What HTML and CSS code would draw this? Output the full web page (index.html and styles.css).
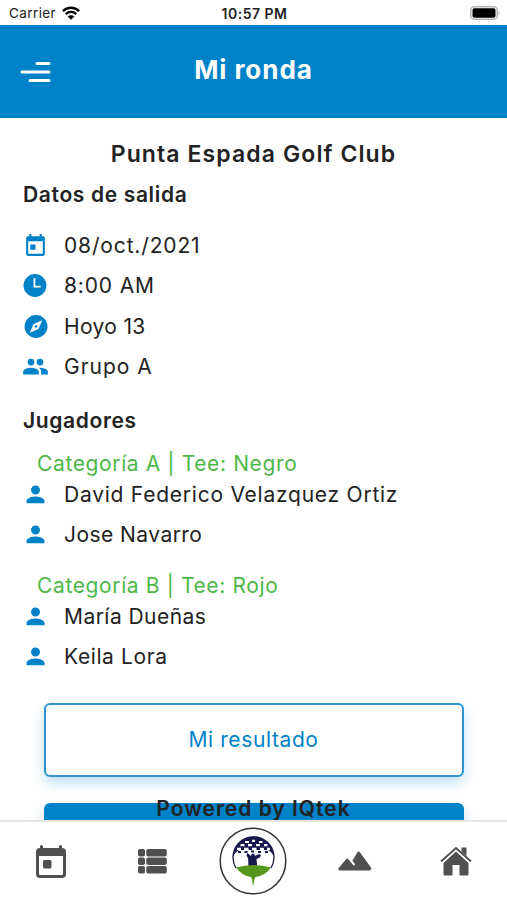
FILE: index.html
```html
<!DOCTYPE html>
<html lang="es">
<head>
<meta charset="utf-8">
<meta name="viewport" content="width=device-width, initial-scale=1">
<title>Mi ronda</title>
<link rel="stylesheet" href="styles.css">
</head>
<body>
<svg width="0" height="0" class="defs" aria-hidden="true">
  <symbol id="calendar" viewBox="0 0 24 24"><path d="M19 3h-1V1h-2v2H8V1H6v2H5a2 2 0 0 0-2 2v15a2 2 0 0 0 2 2h14a2 2 0 0 0 2-2V5a2 2 0 0 0-2-2zm0 17H5V8h14zM7 11h5v5H7z"/></symbol>
  <symbol id="person" viewBox="0 0 24 24"><path d="M12 12a4.300 4.300 0 1 0 0-8.600 4.300 4.300 0 0 0 0 8.600zm0 1.800c-2.700 0-8.600 1.300-8.600 4.200v2.400h17.200V18c0-2.900-5.900-4.200-8.600-4.200z"/></symbol>
</svg>
<div class="screen">
  <div class="status">
    <span class="carrier">Carrier
      <svg class="wifi" viewBox="0 0 18 14"><g fill="none" stroke="#000" stroke-width="2.300"><path d="M.9 5.100a11.500 11.500 0 0 1 16.200 0"/><path d="M3.800 8.100a7.400 7.400 0 0 1 10.400 0"/></g><path d="M9 13.800 5.700 10.500a4.700 4.700 0 0 1 6.600 0z"/></svg>
    </span>
    <b class="time">10:57 PM</b>
    <svg class="battery" viewBox="0 0 30 14"><rect x=".8" y=".8" width="26.400" height="12.400" rx="3.500" fill="#fff" stroke="#b5b5b5" stroke-width="1.500"/><rect x="2.500" y="2.300" width="23" height="9.400" rx="1.800"/><path d="M28.500 4.500q2 2.500 0 5z" fill="#aaa"/></svg>
  </div>
  <header class="header">
    <svg class="menu" viewBox="0 0 32 24"><path d="M17 3.500h12M2 12h27M10 20.500h19" stroke="#fff" stroke-width="3" stroke-linecap="round"/></svg>
    <h1>Mi ronda</h1>
  </header>
  <main class="content">
    <h2 class="club">Punta Espada Golf Club</h2>
    <h3 class="section">Datos de salida</h3>
    <ul class="details">
      <li><svg class="icon"><use href="#calendar"/></svg><span class="t-date">08/oct./2021</span></li>
      <li><svg class="icon" viewBox="0 0 24 24"><circle cx="11.500" cy="12" r="11"/><path d="M11 5v8h6" fill="none" stroke="#fff" stroke-width="1.700"/></svg><span class="t-time">8:00 AM</span></li>
      <li><svg class="icon" viewBox="0 0 24 24"><circle cx="12.500" cy="12" r="11"/><path d="m18.500 6-3.700 8.300L6.500 18l3.700-8.300z" fill="#fff"/><circle cx="12.500" cy="12" r="1.300"/></svg><span class="t-hole">Hoyo 13</span></li>
      <li><svg class="icon group" viewBox="0 0 24 24"><path d="M16 11a3 3 0 1 0 0-6 3 3 0 0 0 0 6zm-8 0a3 3 0 1 0 0-6 3 3 0 0 0 0 6zm0 2c-2.300 0-7 1.200-7 3.500V19h14v-2.500C15 14.200 10.300 13 8 13zm8 0-1 .1c1.200.8 2 2 2 3.400V19h6v-2.500c0-2.300-4.700-3.500-7-3.500z"/></svg><span class="t-group">Grupo A</span></li>
    </ul>
    <h3 class="section players">Jugadores</h3>
    <section class="category">
      <h4>Categoría A | Tee: Negro</h4>
      <ul>
        <li><svg class="icon"><use href="#person"/></svg><span class="t-long">David Federico Velazquez Ortiz</span></li>
        <li><svg class="icon"><use href="#person"/></svg><span class="t-short">Jose Navarro</span></li>
      </ul>
    </section>
    <section class="category">
      <h4>Categoría B | Tee: Rojo</h4>
      <ul>
        <li><svg class="icon"><use href="#person"/></svg><span class="t-short">María Dueñas</span></li>
        <li><svg class="icon"><use href="#person"/></svg><span>Keila Lora</span></li>
      </ul>
    </section>
    <button class="btn outline">Mi resultado</button>
    <button class="btn solid"></button>
    <p class="powered">Powered by IQtek</p>
  </main>
  <nav class="tabs">
    <svg class="tab-cal" viewBox="0 0 30 33"><path d="M5.500 0a1.500 1.500 0 0 1 1.500 1.500V3h16V1.500a1.500 1.500 0 0 1 3 0V3a4 4 0 0 1 4 4v22a4 4 0 0 1-4 4H4a4 4 0 0 1-4-4V7a4 4 0 0 1 4-4V1.500A1.500 1.500 0 0 1 5.500 0zM3 11v17.500A1.500 1.500 0 0 0 4.500 30h21a1.500 1.500 0 0 0 1.500-1.500V11z"/><rect x="7" y="15" width="8.500" height="8.500" rx="1.500"/></svg>
    <svg class="tab-list" viewBox="0 0 29 25"><rect width="7" height="7.500" rx="1.800"/><rect x="8.300" width="20.500" height="7.500" rx="1.800"/><rect y="8.500" width="7" height="7.500" rx="1.800"/><rect x="8.300" y="8.500" width="20.500" height="7.500" rx="1.800"/><rect y="17" width="7" height="7.500" rx="1.800"/><rect x="8.300" y="17" width="20.500" height="7.500" rx="1.800"/></svg>
    <svg class="tab-logo" viewBox="0 0 68 68">
      <circle cx="34" cy="34" r="32.800" fill="#fff" stroke="#333" stroke-width="1.500"/>
      <path d="M17 41A20.500 20.500 0 1 1 52 41" fill="none" stroke="#17174d" stroke-width="1.300"/>
      <path d="M14 30A20.500 20.500 0 0 1 55 30Q53 25 49 23H20Q16 25 14 30z" fill="#17174d"/>
      <path d="M26 15h4M33 13.800h3M40 15h3.500M21.500 18.200h4M29 18.200h4M37 18.200h4M45 18.200h3.500M18 21.800h4M25 21.800h4.500M33 21.800h4.500M41 21.800h4M48 21.800h3" stroke="#fff" stroke-width="2.200"/>
      <path d="M19 25h3M25.500 25h3M32 24.500h3M39 25h3M46 25h3" stroke="#17174d" stroke-width="2"/>
      <path d="M29.500 42l-.3-10-1.700-4 1-2 3.500 3q0-2.500 2-2.500t2 2.500l4-2 2 1.200-1.200 2.300-3.300 1.500q.3 6 1.500 10z" fill="#17174d"/>
      <path d="M17 40.500q17-5 35 0-6 8.500-15.500 9.500-2 3-1.800 8h-1q.2-5-1.700-8-9-1-15-9.500z" fill="#56951c"/>
    </svg>
    <svg class="tab-hills" viewBox="0 0 34 20"><path d="M1.500 19.500Q-.5 19 .8 17L8 8.300q1.200-1.400 2.400 0l4.500 5.400q.8 1.200 1.700.3.700-.8 0-1.500l-2.200-2.700L19.300 1.500q1.400-1.800 2.800 0L33 16.500q1 2.500-1.500 3z"/></svg>
    <svg class="tab-home" viewBox="0 0 32 30"><path d="m1 15.500 15-13.500 15 13.500" fill="none" stroke="#505050" stroke-width="2"/><path d="M16 5.500 3.500 17v11A1.500 1.500 0 0 0 5 29.500h7.500V19h7v10.500H27a1.500 1.500 0 0 0 1.500-1.500V17z"/><path d="M21.500 1.500h5V10l-5-4.300z"/></svg>
  </nav>
</div>
</body>
</html>
```
FILE: styles.css
```css
* { box-sizing: border-box; margin: 0; padding: 0; }
body { background: #fff; color: #222; font-family: Inter, "Liberation Sans", sans-serif; }
ul { list-style: none; }
svg { display: block; flex: none; }
.defs { position: absolute; }
.screen { width: 507px; height: 900px; display: flex; flex-direction: column; overflow: hidden; }

.status { height: 25px; flex: none; display: grid; grid-template-columns: 1fr auto 1fr; align-items: center; padding: 1px 7px 0 9px; font-size: 13.500px; }
.carrier { display: flex; align-items: center; gap: 6px; letter-spacing: .4px; }
.wifi { width: 18px; height: 14px; }
.time { font-weight: 600; font-size: 14px; letter-spacing: .5px; }
.battery { width: 30px; height: 14px; justify-self: end; }

.header { height: 93px; flex: none; display: grid; grid-template-columns: 1fr auto 1fr; align-items: center; padding: 0 20px; background: #0082c9; color: #fff; }
.header h1 { font-size: 26px; line-height: 30px; font-weight: 700; letter-spacing: .95px; margin-top: -4px; }
.menu { width: 32px; height: 24px; }

.content { position: relative; flex: 1; min-height: 0; overflow: hidden; padding: 22px 23px 0; }
.club { font-size: 23px; line-height: 28px; font-weight: 600; text-align: center; letter-spacing: 1.100px; }
.section { font-size: 21px; line-height: 26px; font-weight: 600; letter-spacing: .65px; margin-top: 14px; }
.details { margin-top: 17px; }
.details li, .category li { display: flex; align-items: center; gap: 16px; font-size: 21px; letter-spacing: .6px; height: 40.500px; white-space: nowrap; }
.icon { width: 25px; height: 25px; fill: #0082c9; }
.icon.group { width: 27px; height: 27px; margin: 0 -1px; }
.t-date, .t-time { letter-spacing: .85px; }
.t-hole { letter-spacing: .35px; }
.details .t-group { letter-spacing: 1px; }
.t-long { letter-spacing: .76px; }
.t-short { letter-spacing: .45px; }
.players { margin-top: 21px; }
.category { margin-top: 17px; }
.category h4 { font-size: 21px; line-height: 26px; font-weight: 400; color: #4db848; padding-left: 14px; letter-spacing: .63px; }
.category ul { margin-top: -2px; }
.category li { height: 39.500px; }
.category + .category { margin-top: 19px; }

.btn { display: block; width: 420px; height: 74px; margin: 26.500px auto 0; border: 2px solid #3193d0; border-radius: 6px; background: #fff; color: #0082c9; font: 400 21px Inter, sans-serif; letter-spacing: .6px; box-shadow: 0 6px 13px rgba(0, 130, 201, .25); }
.btn.solid { background: #0082c9; border-color: #0082c9; margin-top: 26px; }
.powered { position: absolute; left: 0; right: 0; bottom: -2px; text-align: center; font-size: 21px; line-height: 26px; font-weight: 600; letter-spacing: 1px; }

.tabs { height: 80px; flex: none; display: grid; grid-template-columns: repeat(5, 1fr); align-items: center; justify-items: center; border-top: 2px solid #e5e5e7; background: #fff; fill: #505050; }
.tab-cal { width: 30px; height: 33px; }
.tab-list { width: 29px; height: 25px; }
.tab-logo { width: 68px; height: 68px; }
.tab-hills { width: 34px; height: 20px; }
.tab-home { width: 32px; height: 30px; }
```
